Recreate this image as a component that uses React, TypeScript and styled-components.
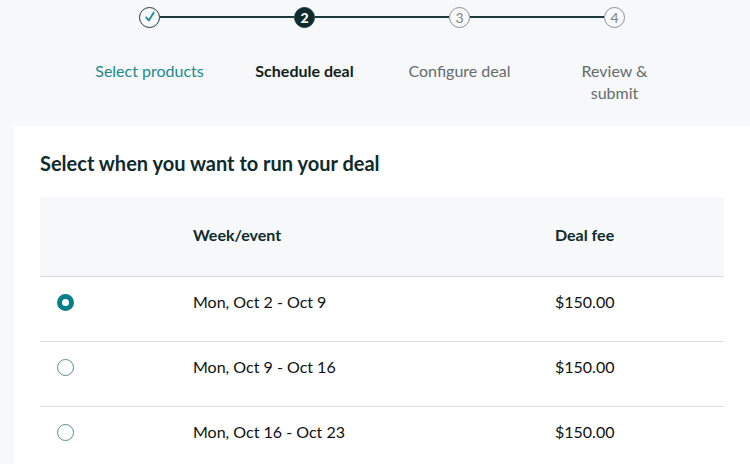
import React, { useState } from 'react';
import styled, { createGlobalStyle } from 'styled-components';

const GlobalStyle = createGlobalStyle`
  body {
    margin: 0;
    background: #f7f8fa;
    font-family: Lato, "Open Sans", sans-serif;
    color: #0f1111;
  }
`;

type Step = {
  label: React.ReactNode;
  state: 'done' | 'current' | 'todo';
};

const steps: Step[] = [
  { label: 'Select products', state: 'done' },
  { label: 'Schedule deal', state: 'current' },
  { label: 'Configure deal', state: 'todo' },
  { label: <>Review &amp;<br />submit</>, state: 'todo' },
];

const weeks = [
  { id: 'w1', range: 'Mon, Oct 2 - Oct 9', fee: '$150.00' },
  { id: 'w2', range: 'Mon, Oct 9 - Oct 16', fee: '$150.00' },
  { id: 'w3', range: 'Mon, Oct 16 - Oct 23', fee: '$150.00' },
];

const Page = styled.div`
  width: 750px;
  height: 464px;
  overflow: hidden;
`;

const Stepper = styled.div`
  display: grid;
  grid-template-columns: repeat(4, 155px);
  padding: 6px 0 0 72px;
  height: 120px;
  box-sizing: content-box;
`;

const StepCol = styled.div`
  display: flex;
  flex-direction: column;
  align-items: center;
`;

const Track = styled.div`
  display: flex;
  align-items: center;
  width: 100%;
  height: 22px;
`;

const Line = styled.div<{ $hidden?: boolean }>`
  flex: 1;
  height: 2px;
  background: ${p => (p.$hidden ? 'transparent' : '#1d3a3d')};
`;

const Dot = styled.div<{ $state: Step['state'] }>`
  width: 21px;
  height: 21px;
  box-sizing: border-box;
  border-radius: 50%;
  display: flex;
  align-items: center;
  justify-content: center;
  font-size: 14px;
  border: 1.5px solid ${p => (p.$state === 'todo' ? '#8a9092' : '#1d3a3d')};
  background: ${p => (p.$state === 'current' ? '#0f2b2e' : 'transparent')};
  color: ${p => (p.$state === 'current' ? '#fff' : '#7d8486')};
  font-weight: ${p => (p.$state === 'current' ? 900 : 400)};
`;

const StepLabel = styled.div<{ $state: Step['state'] }>`
  margin-top: 32px;
  font-size: 16px;
  line-height: 22px;
  text-align: center;
  font-weight: ${p => (p.$state === 'current' ? 700 : 400)};
  color: ${p =>
    p.$state === 'done' ? '#1b8a90' : p.$state === 'current' ? '#0f1f21' : '#646c6e'};
`;

const Card = styled.div`
  margin-left: 14px;
  background: #fff;
  padding: 24px 26px 0 26px;
  min-height: 338px;
`;

const Heading = styled.h2`
  margin: 0 0 21px 0;
  font-size: 20px;
  line-height: 26px;
  font-weight: 700;
  color: #0f2a2d;
`;

const Table = styled.div`
  display: grid;
  grid-template-columns: 153px 362px 1fr;
`;

const HeadCell = styled.div`
  background: #f7f8fa;
  height: 80px;
  padding-bottom: 4px;
  display: flex;
  align-items: center;
  font-size: 16px;
  font-weight: 700;
  color: #0f2a2d;
  border-bottom: 1.5px solid #d8dcdd;
  box-sizing: border-box;
`;

const Cell = styled.div<{ $last?: boolean }>`
  height: 65px;
  padding-top: 14px;
  display: flex;
  align-items: flex-start;
  font-size: 16px;
  line-height: 22px;
  color: #0f1111;
  box-sizing: border-box;
  border-bottom: ${p => (p.$last ? 'none' : '1.5px solid #dcdfe0')};
`;

const RadioCell = styled(Cell)`
  padding-left: 17px;
  padding-top: 17px;
  cursor: pointer;
`;

const Radio = styled.span<{ $checked: boolean }>`
  width: 17px;
  height: 17px;
  box-sizing: border-box;
  border-radius: 50%;
  background: #fff;
  border: ${p => (p.$checked ? '5px solid #077e88' : '1.5px solid #5b8a8e')};
`;

const App: React.FC = () => {
  const [selected, setSelected] = useState('w1');

  return (
    <Page>
      <GlobalStyle />
      <Stepper>
        {steps.map((step, i) => (
          <StepCol key={i}>
            <Track>
              <Line $hidden={i === 0} />
              <Dot $state={step.state}>
                {step.state === 'done' ? (
                  <svg width="12" height="12" viewBox="0 0 12 12">
                    <path d="M2.2 6.4 L4.8 9.4 L9.6 1.8" fill="none" stroke="#1b8a90" strokeWidth="1.8" strokeLinecap="round" strokeLinejoin="round" />
                  </svg>
                ) : (
                  i + 1
                )}
              </Dot>
              <Line $hidden={i === steps.length - 1} />
            </Track>
            <StepLabel $state={step.state}>{step.label}</StepLabel>
          </StepCol>
        ))}
      </Stepper>

      <Card>
        <Heading>Select when you want to run your deal</Heading>
        <Table>
          <HeadCell />
          <HeadCell>Week/event</HeadCell>
          <HeadCell>Deal fee</HeadCell>
          {weeks.map((w, i) => {
            const last = i === weeks.length - 1;
            return (
              <React.Fragment key={w.id}>
                <RadioCell $last={last} onClick={() => setSelected(w.id)}>
                  <Radio $checked={selected === w.id} />
                </RadioCell>
                <Cell $last={last}>{w.range}</Cell>
                <Cell $last={last}>{w.fee}</Cell>
              </React.Fragment>
            );
          })}
        </Table>
      </Card>
    </Page>
  );
};

export default App;
